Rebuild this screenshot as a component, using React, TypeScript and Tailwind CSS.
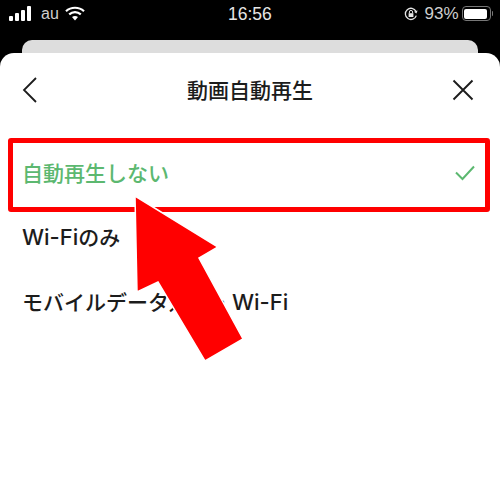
export default function App() {
  const latin = "font-['Inter',sans-serif] text-[22px]";
  return (
    <div className="relative w-[500px] h-[490px] bg-black overflow-hidden font-['Noto_Sans_CJK_JP','Noto_Sans',sans-serif]">
      {/* status bar */}
      <div className="relative h-10 flex items-center justify-between text-[#d9d9d9] pl-[9px] pr-[7px] pb-[13px]">
        <div className="flex items-center">
          <div className="flex items-end gap-[2px] h-[15px]">
            <div className="w-[4px] h-[5px] bg-white rounded-[1px]" />
            <div className="w-[4px] h-[8px] bg-white rounded-[1px]" />
            <div className="w-[4px] h-[11px] bg-white rounded-[1px]" />
            <div className="w-[4px] h-[15px] bg-white rounded-[1px]" />
          </div>
          <span className="ml-[10px] text-[16px] leading-none font-['Liberation_Sans',sans-serif] text-[#cfcfcf]">au</span>
          <svg className="ml-[6px]" width="20" height="15" viewBox="0 0 20 15">
            <path d="M1 5.2 C6 0.6 14 0.6 19 5.2" fill="none" stroke="#fff" strokeWidth="2.2" />
            <path d="M4.2 8.4 C7.6 5.4 12.4 5.4 15.8 8.4" fill="none" stroke="#fff" strokeWidth="2.2" />
            <path d="M7 11 C8.8 9.6 11.2 9.6 13 11 L10 14.5 Z" fill="#fff" />
          </svg>
        </div>
        <span className="absolute left-[228px] top-[4px] text-[17.5px] leading-[20px] font-['Liberation_Sans',sans-serif] text-[#e6e6e6]">16:56</span>
        <div className="flex items-center">
          <svg width="14" height="14" viewBox="0 0 14 14">
            <path d="M12.3 8.6 A5.6 5.6 0 1 1 12 4.4" fill="none" stroke="#e6e6e6" strokeWidth="1.3" />
            <path d="M13.6 3.6 L12.4 6.4 L10 4.8 Z" fill="#e6e6e6" />
            <rect x="4.6" y="6.2" width="4.8" height="3.8" fill="#e6e6e6" />
            <path d="M5.4 6.2 V5 a1.6 1.6 0 0 1 3.2 0 V6.2" fill="none" stroke="#e6e6e6" strokeWidth="1" />
          </svg>
          <span className="ml-[6px] text-[17px] leading-none font-['Liberation_Sans',sans-serif] text-[#cfcfcf]">93%</span>
          <div className="ml-[3px] w-[29px] h-[15px] border border-[#777] rounded-[4px] p-[1.5px]">
            <div className="w-[23px] h-full bg-white rounded-[2px]" />
          </div>
          <div className="ml-[1px] w-[1.5px] h-[5px] bg-[#777] rounded-r-sm" />
        </div>
      </div>
      {/* card behind */}
      <div className="mx-[22px] h-[13px] bg-[#dddddd] rounded-t-[10px]" />
      {/* sheet */}
      <div className="h-[437px] bg-white rounded-t-[14px] text-[#1c1c1c]">
        <div className="h-[75px] grid grid-cols-[1fr_auto_1fr] items-center px-[22px] pb-[2px]">
          <svg width="16" height="26" viewBox="0 0 16 26">
            <path d="M14 1 L2 13 L14 25" fill="none" stroke="#1c1c1c" strokeWidth="1.8" />
          </svg>
          <span className="text-[21px] leading-none font-medium">動画自動再生</span>
          <svg className="justify-self-end mr-[4px]" width="22" height="22" viewBox="0 0 22 22">
            <path d="M1.5 1.5 L20.5 20.5 M20.5 1.5 L1.5 20.5" fill="none" stroke="#1c1c1c" strokeWidth="1.9" />
          </svg>
        </div>
        <div className="mt-[12px] h-[65px] pl-[22px] pr-[25px] flex items-center justify-between">
          <span className="text-[21px] font-medium text-[#5cb870]">自動再生しない</span>
          <svg width="20" height="16" viewBox="0 0 20 16">
            <path d="M1 7.5 L7.5 14 L19 1.5" fill="none" stroke="#5cb870" strokeWidth="2" />
          </svg>
        </div>
        <div className="h-[65px] pl-[22px] flex items-center">
          <span className="text-[21px] font-medium"><span className={latin}>Wi-Fi</span>のみ</span>
        </div>
        <div className="h-[65px] pl-[22px] flex items-center">
          <span className="text-[21px] font-medium">モバイルデータ通信・<span className={latin}>Wi-Fi</span></span>
        </div>
      </div>
      {/* annotation overlay */}
      <div className="absolute left-2 top-[138px] w-[482px] h-[74px] border-[5px] border-[#ff0000] rounded-[3px]" />
      <svg className="absolute left-0 top-0" width="500" height="490" viewBox="0 0 500 490">
        <polygon points="135,196 218,247 199,258 243,339 205,361 158,282 137,292" fill="#ff0000" stroke="#fff" strokeWidth="1.5" strokeLinejoin="miter" />
      </svg>
    </div>
  );
}
